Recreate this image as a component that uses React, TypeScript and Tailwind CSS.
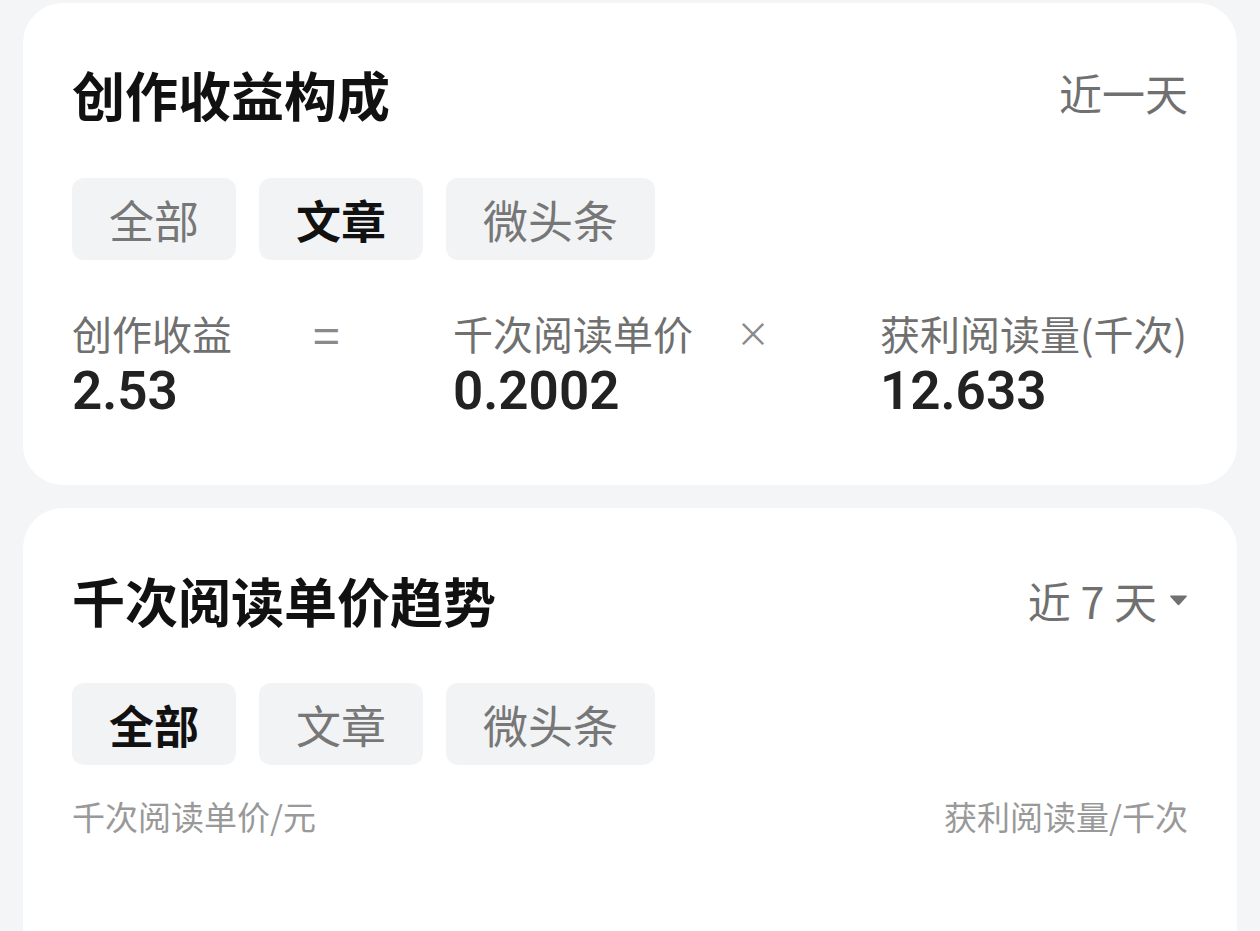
import React, { useState } from 'react';

const cjk = "font-['Noto_Sans_CJK_SC','Noto_Sans',sans-serif]";
const num = "font-['Roboto','Noto_Sans_CJK_SC',sans-serif]";

function Tabs({ items, active, onChange }: { items: string[]; active: number; onChange: (i: number) => void }) {
  return (
    <div className="flex gap-[23px]">
      {items.map((label, i) => (
        <button
          key={label}
          onClick={() => onChange(i)}
          className={`h-[82px] px-[37px] rounded-[12px] bg-[#f2f3f5] text-[45px] leading-none ${
            i === active ? 'text-[#111] font-semibold' : 'text-[#777]'
          }`}
        >
          {label}
        </button>
      ))}
    </div>
  );
}

function DownTriangle() {
  return (
    <svg width="19" height="12" viewBox="0 0 19 12" className="ml-[12px]">
      <path d="M2 1.5 H17 Q18.5 1.5 17.6 2.8 L10.6 10.6 Q9.5 11.8 8.4 10.6 L1.4 2.8 Q0.5 1.5 2 1.5 Z" fill="#707070" />
    </svg>
  );
}

export default function App() {
  const [tabA, setTabA] = useState(1);
  const [tabB, setTabB] = useState(0);
  const tabs = ['全部', '文章', '微头条'];

  return (
    <div className={`min-h-screen bg-[#f4f5f7] pt-[3px] px-[23px] ${cjk}`}>
      {/* 创作收益构成 */}
      <section className="bg-white rounded-[40px] px-[49px] pt-[59px] pb-[64px]">
        <div className="flex items-center justify-between h-[64px]">
          <h2 className="text-[53px] font-bold text-[#111] leading-none">创作收益构成</h2>
          <span className="text-[43px] text-[#707070] leading-none -mt-[4px]">近一天</span>
        </div>
        <div className="mt-[52px]">
          <Tabs items={tabs} active={tabA} onChange={setTabA} />
        </div>
        <div className="flex mt-[49px]">
          <div className="w-[241px]">
            <div className="text-[40px] leading-[48px] text-[#707070]">创作收益</div>
            <div className={`mt-[4px] text-[53px] leading-[60px] font-semibold text-[#222] ${num}`}>2.53</div>
          </div>
          <div className="w-[140px] text-[48px] leading-[48px] text-[#8a8a8a]">=</div>
          <div className="w-[283px]">
            <div className="text-[40px] leading-[48px] text-[#707070]">千次阅读单价</div>
            <div className={`mt-[4px] text-[53px] leading-[60px] font-semibold text-[#222] ${num}`}>0.2002</div>
          </div>
          <div className="w-[144px] text-[34px] leading-[48px] text-[#8a8a8a]">×</div>
          <div className="flex-1">
            <div className="text-[40px] leading-[48px] text-[#707070]">获利阅读量(千次)</div>
            <div className={`mt-[4px] text-[53px] leading-[60px] font-semibold text-[#222] ${num}`}>12.633</div>
          </div>
        </div>
      </section>

      {/* 千次阅读单价趋势 */}
      <section className="mt-[23px] bg-white rounded-t-[40px] px-[49px] pt-[60px] pb-[200px]">
        <div className="flex items-center justify-between h-[64px]">
          <h2 className="text-[53px] font-bold text-[#111] leading-none">千次阅读单价趋势</h2>
          <button className="flex items-center text-[43px] text-[#707070] leading-none">
            <span>近 7 天</span>
            <DownTriangle />
          </button>
        </div>
        <div className="mt-[51px]">
          <Tabs items={tabs} active={tabB} onChange={setTabB} />
        </div>
        <div className="flex justify-between mt-[31px] text-[33px] leading-[40px] text-[#999]">
          <span>千次阅读单价/元</span>
          <span>获利阅读量/千次</span>
        </div>
      </section>
    </div>
  );
}
